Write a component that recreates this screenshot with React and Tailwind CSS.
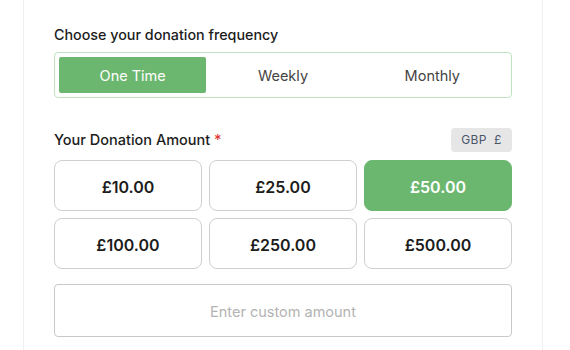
import React from "react";

export default function App() {
  const amounts = ["£10.00", "£25.00", "£50.00", "£100.00", "£250.00", "£500.00"];
  return (
    <div className="w-[570px] h-[350px] bg-white overflow-hidden" style={{ fontFamily: "Inter, 'Noto Sans', sans-serif" }}>
      <div className="ml-[23px] w-[520px] h-[350px] border-x border-[#efefef] pt-[25px] px-[30px]">
        <div className="text-[14.3px] leading-[20px] font-medium text-[#1c1c1c]">Choose your donation frequency</div>
        <div className="mt-[7px] h-[46px] border border-[#bfe3c0] rounded-[4px] p-[4px] grid grid-cols-3">
          <div className="bg-[#6cb770] rounded-[2px] mr-[2px] flex items-center justify-center pt-[2px] text-white text-[14.5px]">One Time</div>
          <div className="flex items-center justify-center pt-[2px] text-[#444] text-[14.5px]">Weekly</div>
          <div className="flex items-center justify-center pt-[2px] text-[#444] text-[14.5px]">Monthly</div>
        </div>
        <div className="mt-[30px] h-[24px] flex items-center justify-between">
          <div className="text-[14.5px] font-medium text-[#1c1c1c]">
            Your Donation Amount <span className="text-[#e0342c]">*</span>
          </div>
          <div className="h-[24px] w-[61px] rounded-[4px] bg-[#e6e6e6] flex items-center justify-center text-[12px] text-[#4a5568] tracking-wide">
            GBP&nbsp;&nbsp;£
          </div>
        </div>
        <div className="mt-[8px] grid grid-cols-3 gap-x-[7px] gap-y-[7px]">
          {amounts.map((a, i) => (
            <div
              key={a}
              className={
                i === 2
                  ? "h-[51px] rounded-[8px] bg-[#6cb770] border border-[#6cb770] flex items-center justify-center pt-[2px] text-white text-[16px] font-semibold"
                  : "h-[51px] rounded-[8px] bg-white border border-[#cfcfcf] flex items-center justify-center pt-[2px] text-[#1c1c1c] text-[16px] font-semibold"
              }
            >
              {a}
            </div>
          ))}
        </div>
        <div className="mt-[15px] h-[53px] rounded-[4px] border border-[#c8c8c8] flex items-center justify-center pt-[2px] text-[14.5px] text-[#b3b3b3]">
          Enter custom amount
        </div>
      </div>
    </div>
  );
}
